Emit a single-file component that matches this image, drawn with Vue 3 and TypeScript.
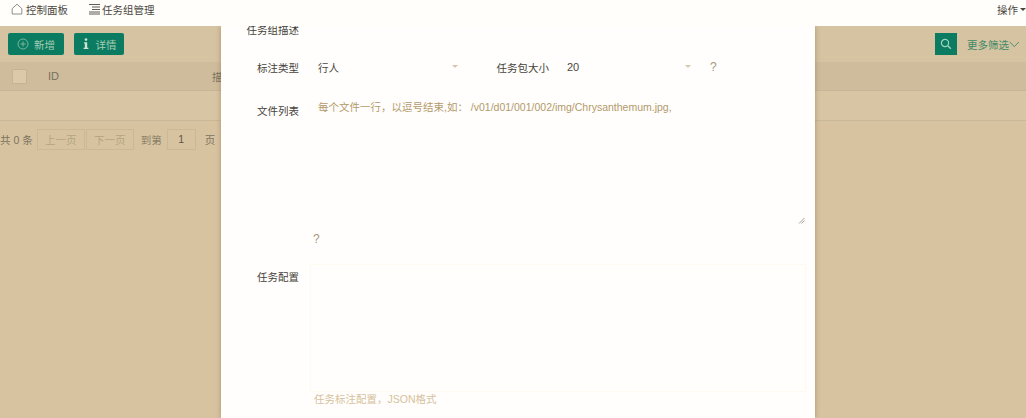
<script setup lang="ts">
const labelCols: string[] = ['ID', '描述']
</script>

<template>
  <div class="page">
    <header class="nav">
      <div class="crumbs">
        <span class="crumb">
          <svg class="nav-ico" viewBox="0 0 12 12" width="12" height="12"><path d="M1.2 5.6 6 1.2l4.8 4.4V11H1.2z" fill="none" stroke="#77736a" stroke-width=".8" /></svg>
          控制面板
        </span>
        <span class="crumb second">
          <svg class="nav-ico" viewBox="0 0 13 12" width="13" height="12"><path d="M1 1.5h11M4 4h8M4 6.5h8M1 9h11M1 11h11" fill="none" stroke="#4f4b43" stroke-width=".9" /></svg>
          任务组管理
        </span>
      </div>
      <span class="action">操作 <i class="caret"></i></span>
    </header>

    <main class="content">
      <div class="toolbar">
        <div class="btns">
          <button class="btn">
            <svg viewBox="0 0 12 12" width="12" height="12"><circle cx="6" cy="6" r="5" fill="none" stroke="#8dc4a9" stroke-width=".8" /><path d="M6 3.4v5.2M3.4 6h5.2" stroke="#8dc4a9" stroke-width=".8" /></svg>
            新增
          </button>
          <button class="btn detail">
            <svg viewBox="0 0 8 12" width="8" height="12"><circle cx="4" cy="1.6" r="1.3" fill="#cfe3cf" /><path d="M2 4.2h3.2v5.6H6.4V11H1.6V9.8h1.2V5.4H2z" fill="#cfe3cf" /></svg>
            详情
          </button>
        </div>
        <div class="filter">
          <button class="search" aria-label="搜索">
            <svg viewBox="0 0 12 12" width="12" height="12"><circle cx="5" cy="5" r="3.6" fill="none" stroke="#9fd2bb" stroke-width="1.2" /><path d="m7.8 7.8 3 3" stroke="#9fd2bb" stroke-width="1.4" /></svg>
          </button>
          <span class="more">更多筛选
            <svg viewBox="0 0 12 7" width="11" height="7"><path d="m.8.8 5 5 5-5" fill="none" stroke="#3f8a68" stroke-width="1" /></svg>
          </span>
        </div>
      </div>

      <div class="thead">
        <span class="check-cell"><i class="check"></i></span>
        <span class="id-cell">{{ labelCols[0] }}</span>
        <span class="desc-cell">{{ labelCols[1] }}</span>
      </div>
      <div class="empty-row"></div>

      <div class="pager">
        <span>共 0 条</span>
        <span class="pages"><span class="page-btn">上一页</span><span class="page-btn">下一页</span></span>
        <span class="jump">到第</span>
        <span class="page-input">1</span>
        <span>页</span>
      </div>

      <section class="modal">
        <form class="form">
          <div class="row desc-row">
            <label class="label">任务组描述</label>
          </div>
          <div class="row select-row">
            <label class="label">标注类型</label>
            <div class="select first">行人<i class="arrow"></i></div>
            <label class="inline-label">任务包大小</label>
            <div class="select second-select">20<i class="arrow"></i></div>
            <span class="hint-mark">?</span>
          </div>
          <div class="row file-row">
            <label class="label">文件列表</label>
            <div class="textarea files">
              每个文件一行，以逗号结束,如： /v01/d01/001/002/img/Chrysanthemum.jpg,
              <svg class="grip" viewBox="0 0 7 7" width="7" height="7"><path d="M1 6.5 6.5 1M3.5 6.5l3-3" stroke="#8b8678" stroke-width=".8" /></svg>
            </div>
          </div>
          <div class="mark-row"><span class="hint-mark">?</span></div>
          <div class="row config-row">
            <label class="label">任务配置</label>
            <div class="textarea config"></div>
          </div>
          <p class="help">任务标注配置，JSON格式</p>
        </form>
      </section>
    </main>
  </div>
</template>

<style>
html, body { margin: 0; background: #fffefb; }
</style>

<style scoped>
.page {
  width: 1026px;
  height: 418px;
  overflow: hidden;
  display: flex;
  flex-direction: column;
  font-family: "Liberation Sans", "Noto Sans CJK SC", sans-serif;
  font-size: 10.5px;
  color: #4a463d;
}
.nav {
  height: 26px;
  flex: none;
  box-sizing: border-box;
  padding: 0 0 8px 11px;
  display: flex;
  align-items: center;
  justify-content: space-between;
  background: #fffefb;
}
.crumbs { display: flex; }
.crumb { display: flex; align-items: center; gap: 3px; }
.second { margin-left: 20px; gap: 1px; }
.nav-ico { display: block; }
.action { display: flex; align-items: center; gap: 2px; }
.caret {
  width: 0; height: 0;
  border-left: 3px solid transparent;
  border-right: 3px solid transparent;
  border-top: 3px solid #4a463d;
}
.content {
  position: relative;
  flex: 1;
  overflow: hidden;
  background: #d8c3a0;
  color: #77705c;
}
.toolbar {
  height: 36px;
  box-sizing: border-box;
  padding: 7px 6px 0 8px;
  display: flex;
  justify-content: space-between;
  background: #d6c3a1;
}
.btns { display: flex; gap: 10px; }
.btn {
  height: 22px;
  padding: 0;
  width: 56px;
  border: 0;
  border-radius: 2px;
  background: #0b7c61;
  color: #a5cdb2;
  font: inherit;
  display: flex;
  align-items: center;
  justify-content: center;
  gap: 5px;
}
.detail { width: 50px; gap: 6px; }
.filter { display: flex; align-items: flex-start; gap: 10px; }
.search {
  width: 22px;
  height: 22px;
  padding: 0;
  border: 0;
  background: #0b7c61;
  display: flex;
  align-items: center;
  justify-content: center;
}
.more {
  display: flex;
  align-items: center;
  height: 22px;
  color: #3f8a68;
  gap: 0;
}
.thead {
  height: 28px;
  display: flex;
  align-items: center;
  background: #cfbc9c;
  border-bottom: 1px solid #c7b596;
}
.check-cell { width: 48px; padding-left: 12px; box-sizing: border-box; }
.check {
  display: block;
  width: 13px;
  height: 13px;
  background: #dcc9a9;
  border: 1px solid #c4b295;
  border-radius: 1px;
}
.id-cell { width: 164px; font-size: 11px; }
.desc-cell { flex: 1; }
.empty-row {
  height: 29px;
  background: #d8c5a3;
  border-bottom: 1px solid #c9b898;
}
.pager {
  display: flex;
  align-items: center;
  height: 24px;
  margin-top: 6px;
  color: #7b7460;
}
.pages { display: flex; margin-left: 4px; }
.page-btn {
  width: 48px;
  height: 21px;
  display: flex;
  align-items: center;
  justify-content: center;
  border: 1px solid #cbb996;
  margin-right: 1px;
  box-sizing: border-box;
  color: #b3a383;
}
.jump { margin-left: 6px; color: #8a8169; }
.page-input {
  width: 29px;
  height: 21px;
  margin: 0 9px 0 5px;
  border: 1px solid #cbb996;
  box-sizing: border-box;
  display: flex;
  align-items: center;
  justify-content: center;
  color: #5c5543;
}
.modal {
  position: absolute;
  left: 221px;
  top: 0;
  width: 594px;
  height: 392px;
  background: #fffefc;
  box-shadow: 0 0 5px rgba(110, 90, 50, .45);
}
.form { display: flex; flex-direction: column; }
.row { display: flex; }
.label {
  width: 78px;
  flex: none;
  text-align: right;
  color: #45423a;
}
.desc-row { height: 20px; margin-top: -7px; align-items: center; }
.select-row { align-items: center; height: 20px; margin-top: 18px; }
.select {
  position: relative;
  height: 20px;
  box-sizing: border-box;
  display: flex;
  align-items: center;
  color: #4a463d;
}
.first { width: 144px; margin-left: 19px; }
.inline-label { width: 56px; margin-left: 31px; text-align: right; color: #45423a; white-space: nowrap; }
.second-select { width: 128px; margin-left: 18px; font-size: 11px; }
.arrow {
  position: absolute;
  right: 4px;
  top: 8px;
  width: 0; height: 0;
  border-left: 3.5px solid transparent;
  border-right: 3.5px solid transparent;
  border-top: 3.5px solid #d5c8ac;
}
.hint-mark {
  color: #a8987a;
  font-size: 12px;
  margin-left: 15px;
}
.file-row { margin-top: 20px; height: 128px; }
.file-row .label { padding-top: 6px; }
.textarea {
  position: relative;
  box-sizing: border-box;
  margin-left: 13px;
  width: 496px;
}
.files {
  height: 128px;
  padding: 2px 8px;
  margin-left: 11px;
  color: #b39a6b;
  font-size: 10.5px;
  line-height: 16px;
  white-space: nowrap;
}
.grip { position: absolute; right: 1px; bottom: 1px; }
.mark-row { height: 22px; display: flex; align-items: center; padding-left: 80px; margin-top: 3px; }
.mark-row .hint-mark { margin-left: 12px; }
.config-row { margin-top: 14px; height: 128px; }
.config-row .label { padding-top: 5px; }
.config {
  height: 128px;
  margin-left: 11px;
  border: 1px solid #fffaf0;
}
.help {
  margin: 0 0 0 93px;
  color: #d6c19b;
  font-size: 10.5px;
  line-height: 14px;
}
</style>
